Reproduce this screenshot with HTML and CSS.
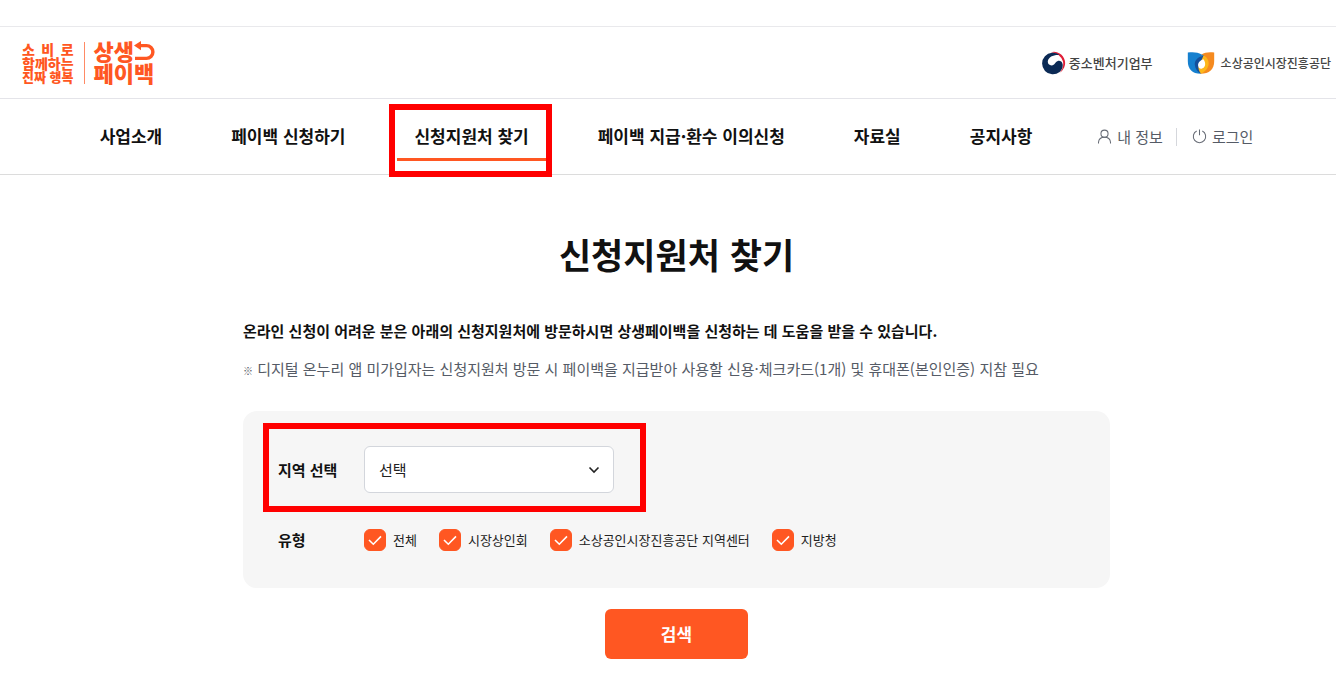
FILE: index.html
```html
<!DOCTYPE html>
<html lang="ko">
<head>
<meta charset="utf-8">
<meta name="viewport" content="width=device-width, initial-scale=1">
<title>신청지원처 찾기 - 상생페이백</title>
<link rel="stylesheet" href="styles.css">
</head>
<body>
<header class="site-header">
  <div class="brand-bar">
    <a class="brand" href="#">
      <span class="brand-slogan">
        <span class="slogan-spread"><span>소</span><span>비</span><span>로</span></span>
        <span>함께하는</span>
        <span class="slogan-last">진짜 행복</span>
      </span>
      <span class="brand-name">
        <span class="brand-top">상생<svg class="brand-arrow" viewBox="0 0 21 22" aria-hidden="true"><path d="M6 6.6H12.5A6.4 6.4 0 0 1 12.5 19.4H1" fill="none" stroke="#ff5722" stroke-width="3.4"/><path d="M0 6.6 7 2V11.2Z" fill="#ff5722"/></svg></span>
        <span>페이백</span>
      </span>
    </a>
    <div class="agencies">
      <a class="agency" href="#">
        <svg class="mark-mss" viewBox="0 0 24 24" aria-hidden="true">
          <path d="M9 1.2A11.2 11.2 0 0 1 22.8 9.5A11.2 11.2 0 0 1 17.5 21.8A13 13 0 0 0 21 10.5A13 13 0 0 0 9 1.2Z" fill="#e01e37"/>
          <path d="M17.5 4A10.8 10.8 0 1 0 17.6 21C20 19 21.2 16 20.6 13C20 10.4 17.8 9.4 15.8 10C13 10.8 13 14.4 9.6 14.4C6.8 14.4 5.4 12.3 5.9 9.8C6.8 6 11 3.6 17.5 4Z" fill="#0b2a55"/>
        </svg>
        <span>중소벤처기업부</span>
      </a>
      <a class="agency agency-semas" href="#">
        <svg class="mark-semas" viewBox="0 0 28 22" aria-hidden="true">
          <path d="M.8 .6C6-.3 11 .2 14.5 2.6L13.4 21.8C5.6 21.6 .8 17.5 .8 9Z" fill="#1680cf"/>
          <path d="M27.2 .6C22-.3 17.6 .6 14.5 2.6L13.4 21.8C22.4 21.8 27.2 17.4 27.2 9Z" fill="#f58a1f"/>
          <path d="M16.5 3.6C10.4 5.2 7.4 8.6 7.8 13C8.2 17 10.6 20 14 21.8L15 12Z" fill="#14509c"/>
          <path d="M16.5 3.6C20.6 5.6 22.4 9.4 21.4 13.6C20.4 17.4 17.6 20 14 21.8C12.4 20 11.6 18 11.4 15.6Z" fill="#fdb71a"/>
          <path d="M16.4 7.2C12.6 8.6 10.6 11 11.2 14C11.6 16.2 13.2 17.2 15 16.6C17.6 15.6 18.6 13 18 10.4C17.7 9 17.2 8 16.4 7.2Z" fill="#fff"/>
          <path d="M8.8 3.4C12 2.2 14.6 2 17.4 3.4C14.4 3.4 12.2 4.2 9.8 6Z" fill="#1680cf"/>
        </svg>
        <span>소상공인시장진흥공단</span>
      </a>
    </div>
  </div>
  <nav class="main-nav" aria-label="주 메뉴">
    <div class="nav-links">
      <a class="nav-link" href="#">사업소개</a>
      <a class="nav-link" href="#">페이백 신청하기</a>
      <a class="nav-link is-active" href="#" aria-current="page">신청지원처 찾기</a>
      <a class="nav-link" href="#">페이백 지급·환수 이의신청</a>
      <a class="nav-link" href="#">자료실</a>
      <a class="nav-link" href="#">공지사항</a>
    </div>
    <div class="user-links">
      <a class="user-link" href="#">
        <svg class="user-icon" viewBox="0 0 16 16" aria-hidden="true"><circle cx="8" cy="5" r="3.8"/><path d="M1.6 15.4V14.2C1.9 11 4.3 8.9 8 8.9S14.1 11 14.4 14.2V15.4"/></svg>
        <span>내 정보</span>
      </a>
      <a class="user-link" href="#">
        <svg class="user-icon" viewBox="0 0 16 16" aria-hidden="true"><path d="M5 2.1A6.6 6.6 0 1 0 11 2.1M8 .5V6.6"/></svg>
        <span>로그인</span>
      </a>
    </div>
  </nav>
</header>

<main class="content">
  <h1 class="page-title">신청지원처 찾기</h1>
  <p class="lead">온라인 신청이 어려운 분은 아래의 신청지원처에 방문하시면 상생페이백을 신청하는 데 도움을 받을 수 있습니다.</p>
  <p class="note"><span class="note-mark">※</span> 디지털 온누리 앱 미가입자는 신청지원처 방문 시 페이백을 지급받아 사용할 신용·체크카드(1개) 및 휴대폰(본인인증) 지참 필요</p>
  <form class="search-form">
    <div class="panel">
      <div class="field region-field">
        <label class="field-label" for="region">지역 선택</label>
        <span class="select-wrap">
          <select class="select" id="region"><option>선택</option></select>
          <svg class="chevron" viewBox="0 0 12 8" aria-hidden="true"><path d="M1.5 1.5 6 6 10.5 1.5"/></svg>
        </span>
      </div>
      <div class="field" role="group" aria-labelledby="type-label">
        <span class="field-label" id="type-label">유형</span>
        <div class="checks">
          <label class="check"><span class="check-box"><input type="checkbox" checked><svg viewBox="0 0 22 22" aria-hidden="true"><path d="M5 11 9.3 15.2 17 7.4"/></svg></span>전체</label>
          <label class="check"><span class="check-box"><input type="checkbox" checked><svg viewBox="0 0 22 22" aria-hidden="true"><path d="M5 11 9.3 15.2 17 7.4"/></svg></span>시장상인회</label>
          <label class="check"><span class="check-box"><input type="checkbox" checked><svg viewBox="0 0 22 22" aria-hidden="true"><path d="M5 11 9.3 15.2 17 7.4"/></svg></span>소상공인시장진흥공단 지역센터</label>
          <label class="check"><span class="check-box"><input type="checkbox" checked><svg viewBox="0 0 22 22" aria-hidden="true"><path d="M5 11 9.3 15.2 17 7.4"/></svg></span>지방청</label>
        </div>
      </div>
    </div>
    <button class="submit" type="button">검색</button>
  </form>
</main>
</body>
</html>
```
FILE: styles.css
```css
*,
*::before,
*::after {
  box-sizing: border-box;
}

body {
  margin: 0;
  padding-top: 26px;
  background: #fff;
  color: #111;
  font-family: "Noto Sans CJK KR", sans-serif;
  font-size: 15px;
  line-height: 24px;
}

a {
  color: inherit;
  text-decoration: none;
}

/* Header */
.brand-bar {
  display: flex;
  align-items: center;
  justify-content: space-between;
  height: 73px;
  padding: 0 5px 0 22px;
  border-top: 1px solid #e9e9ec;
  border-bottom: 1px solid #e4e4e9;
}

.brand {
  display: flex;
  align-items: center;
  color: #ff5722;
  font-weight: 900;
}

.brand-slogan {
  display: flex;
  flex-direction: column;
  padding-right: 10px;
  border-right: 1px solid #ff8a65;
  font-size: 14px;
  line-height: 14px;
}

.slogan-spread {
  display: flex;
  justify-content: space-between;
}

.slogan-last {
  font-size: 13px;
}

.brand-name {
  display: flex;
  flex-direction: column;
  padding: 0 0 3px 9px;
  font-size: 22px;
  line-height: 22px;
}

.brand-top {
  display: flex;
}

.brand-arrow {
  width: 21px;
  height: 22px;
}

.agencies {
  display: flex;
  align-items: center;
  gap: 34px;
  color: #444;
  font-size: 13px;
  font-weight: 500;
}

.agency {
  display: flex;
  align-items: center;
  gap: 3px;
}

.agency-semas {
  gap: 6px;
  font-size: 12px;
}

.mark-mss {
  width: 24px;
  height: 24px;
}

.mark-semas {
  width: 28px;
  height: 22px;
}

.main-nav {
  display: flex;
  align-items: center;
  justify-content: center;
  gap: 48px;
  height: 76px;
  border-bottom: 1px solid #dcdcdc;
}

.nav-links {
  display: flex;
  gap: 35px;
}

.nav-link {
  position: relative;
  padding: 11px 17px 10px;
  border-bottom: 3px solid transparent;
  font-size: 17px;
  font-weight: 700;
  white-space: nowrap;
}

.is-active {
  border-bottom-color: #ff5722;
}

/* Red highlight frames */
.is-active::after,
.region-field::after {
  content: "";
  position: absolute;
  border: 6px solid #f00;
  pointer-events: none;
}

.is-active::after {
  inset: -9px -6px -19px -8px;
}

.user-links {
  display: flex;
  align-items: center;
  color: #555b66;
}

.user-link {
  display: flex;
  align-items: center;
  gap: 5px;
  white-space: nowrap;
}

.user-link + .user-link::before {
  content: "";
  width: 1px;
  height: 18px;
  margin: 0 10px 0 13px;
  background: #d5d7dc;
}

.user-icon {
  width: 15px;
  height: 15px;
  fill: none;
  stroke: #666b75;
  stroke-width: 1.1;
}

/* Content */
.content {
  max-width: 884px;
  margin: 0 auto;
  padding: 53px 0 34px 17px;
}

.page-title {
  margin: 0 0 39px;
  font-size: 35px;
  line-height: 52px;
  text-align: center;
}

.lead {
  margin: 0 0 14px;
  font-weight: 700;
}

.note {
  margin: 0 0 30px;
  color: #555b66;
}

.note-mark {
  font-size: 10px;
  font-weight: 700;
  line-height: 1;
}

.panel {
  display: flex;
  flex-direction: column;
  gap: 35px;
  padding: 35px 35px 36px;
  border-radius: 14px;
  background: #f6f6f6;
}

.field {
  display: flex;
  align-items: center;
}

.region-field {
  position: relative;
}

.region-field::after {
  top: -23px;
  bottom: -19px;
  left: -15px;
  width: 383px;
}

.field-label {
  width: 86px;
  font-weight: 700;
}

.select-wrap {
  position: relative;
  width: 250px;
}

.select {
  display: block;
  width: 100%;
  height: 47px;
  padding: 0 40px 0 14px;
  border: 1px solid #d3d6dc;
  border-radius: 6px;
  background: #fff;
  color: #222;
  font: inherit;
  appearance: none;
}

.chevron {
  position: absolute;
  top: 20px;
  right: 14px;
  width: 12px;
  height: 8px;
  fill: none;
  stroke: #222;
  stroke-width: 1.6;
  pointer-events: none;
}

.checks {
  display: flex;
  flex-wrap: wrap;
  gap: 22px;
}

.check {
  display: flex;
  align-items: center;
  gap: 7px;
  color: #222;
  font-size: 13px;
}

.check-box {
  display: grid;
  width: 22px;
  height: 22px;
}

.check-box input,
.check-box svg {
  grid-area: 1 / 1;
  width: 22px;
  height: 22px;
  margin: 0;
}

.check-box input {
  border: 1px solid #ccc;
  border-radius: 6px;
  background: #fff;
  appearance: none;
}

.check-box input:checked {
  border-color: #ff5722;
  background: #ff5722;
}

.check-box svg {
  fill: none;
  stroke: #fff;
  stroke-width: 1.6;
  pointer-events: none;
}

.submit {
  display: block;
  width: 143px;
  height: 50px;
  margin: 21px auto 0;
  border: 0;
  border-radius: 6px;
  background: #ff5722;
  color: #fff;
  font: inherit;
  font-size: 17px;
  font-weight: 700;
}
```
